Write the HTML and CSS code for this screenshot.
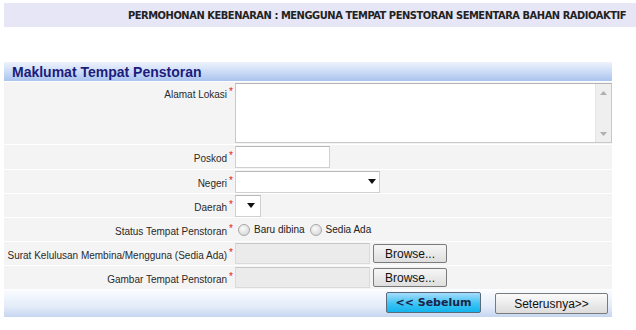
FILE: index.html
```html
<!DOCTYPE html>
<html lang="ms">
<head>
    <meta charset="UTF-8">
    <title>Maklumat Tempat Penstoran</title>
    <link rel="stylesheet" href="styles.css">
</head>
<body>
    <div class="page-title">PERMOHONAN KEBENARAN : MENGGUNA TEMPAT PENSTORAN SEMENTARA BAHAN RADIOAKTIF</div>

    <div class="panel">
        <div class="panel-head">Maklumat Tempat Penstoran</div>

        <!-- Alamat -->
        <div class="row row-tall">
            <label class="lbl">Alamat Lokasi<span class="req">*</span></label>
            <div class="field">
                <div class="textbox">
                    <textarea></textarea>
                    <div class="scroll">
                        <svg width="7" height="4" viewBox="0 0 7 4"><path d="M0 4 L3.5 0 L7 4 Z" fill="#b0b0b0"/></svg>
                        <svg width="7" height="4" viewBox="0 0 7 4"><path d="M0 0 L3.5 4 L7 0 Z" fill="#b0b0b0"/></svg>
                    </div>
                </div>
            </div>
        </div>

        <div class="row">
            <label class="lbl">Poskod<span class="req">*</span></label>
            <div class="field"><input type="text" class="txt poskod"></div>
        </div>

        <div class="row">
            <label class="lbl">Negeri<span class="req">*</span></label>
            <div class="field">
                <div class="select negeri">
                    <svg width="8" height="5" viewBox="0 0 8 5"><path d="M0 0 L8 0 L4 5 Z" fill="#111"/></svg>
                </div>
            </div>
        </div>

        <div class="row">
            <label class="lbl">Daerah<span class="req">*</span></label>
            <div class="field">
                <div class="select daerah">
                    <svg width="8" height="5" viewBox="0 0 8 5"><path d="M0 0 L8 0 L4 5 Z" fill="#111"/></svg>
                </div>
            </div>
        </div>

        <div class="row">
            <label class="lbl">Status Tempat Penstoran<span class="req">*</span></label>
            <div class="field radios">
                <span class="opt"><span class="radio"></span>Baru dibina</span>
                <span class="opt"><span class="radio"></span>Sedia Ada</span>
            </div>
        </div>

        <div class="row">
            <label class="lbl">Surat Kelulusan Membina/Mengguna (Sedia Ada)<span class="req">*</span></label>
            <div class="field">
                <div class="filebox"></div>
                <button class="browse">Browse...</button>
            </div>
        </div>

        <div class="row">
            <label class="lbl">Gambar Tempat Penstoran<span class="req">*</span></label>
            <div class="field">
                <div class="filebox"></div>
                <button class="browse">Browse...</button>
            </div>
        </div>

        <div class="panel-foot">
            <button class="btn-prev">&lt;&lt; Sebelum</button>
            <button class="btn-next">Seterusnya&gt;&gt;</button>
        </div>
    </div>
</body>
</html>
```

FILE: styles.css
```css
body {
    margin: 0;
    padding: 3px 0 0 4px;
    font-family: "Liberation Sans", Arial, sans-serif;
    font-size: 10px;
    color: #333;
    background: #fff;
}

.page-title {
    height: 24px;
    line-height: 25px;
    padding-right: 10px;
    text-align: right;
    background: #e6e6f6;
    font-family: "DejaVu Sans Condensed", "Liberation Sans Narrow", sans-serif;
    font-stretch: condensed;
    font-weight: bold;
    font-size: 11px;
    letter-spacing: -0.45px;
    color: #222;
}

.panel {
    width: 608px;
    margin-top: 35px;
}

.panel-head {
    height: 19px;
    line-height: 20px;
    padding-left: 8px;
    background: linear-gradient(#eef3fd, #c9daf6 55%, #a9c3ee);
    font-size: 14px;
    font-weight: bold;
    color: #1c1c7c;
}

.row {
    display: grid;
    grid-template-columns: 231px 1fr;
    min-height: 23px;
    background: #f4f4f4;
    border-top: 1px solid #fff;
    align-items: center;
}

.row-tall {
    align-items: start;
    min-height: 62px;
}

.lbl {
    font-family: "Liberation Sans", Arial, sans-serif;
    font-size: 10px;
    color: #2a2a2a;
    text-align: right;
    padding-right: 2px;
    white-space: nowrap;
}

.row-tall .lbl {
    padding-top: 4px;
}

.req {
    color: #e02020;
    font-size: 10px;
    vertical-align: 3px;
    margin-left: 2px;
}

.field {
    display: flex;
    align-items: center;
}

.textbox {
    display: flex;
    width: 375px;
    height: 58px;
    margin: 1px 0;
    border: 1px solid #c8c8c8;
    border-top-color: #b4b4b4;
    background: #fff;
}

.textbox textarea {
    flex: 1;
    border: none;
    resize: none;
    outline: none;
    padding: 0;
}

.scroll {
    width: 15px;
    background: #efefef;
    border-left: 1px solid #e4e4e4;
    display: flex;
    flex-direction: column;
    justify-content: space-between;
    align-items: center;
    padding: 7px 0 6px;
}

.txt {
    box-sizing: border-box;
    height: 22px;
    margin: 1px 0;
    border: 1px solid #d0d0d0;
    border-top-color: #b8b8b8;
    background: #fff;
}

.poskod {
    width: 95px;
}

.select {
    box-sizing: border-box;
    height: 22px;
    display: flex;
    align-items: center;
    justify-content: flex-end;
    border: 1px solid #d0d0d0;
    border-top-color: #b8b8b8;
    background: #fff;
}

.negeri {
    width: 145px;
    padding-right: 3px;
}

.daerah {
    width: 26px;
    padding-right: 5px;
}

.radios {
    padding-left: 3px;
    gap: 5px;
    color: #222;
}

.opt {
    display: flex;
    align-items: center;
    gap: 4px;
}

.radio {
    width: 10px;
    height: 10px;
    border-radius: 50%;
    border: 1px solid #a8a8a8;
    background: radial-gradient(circle at 40% 35%, #fafafa, #d2d2d2);
}

.filebox {
    box-sizing: border-box;
    width: 135px;
    height: 21px;
    border: 1px solid #dadada;
    border-top-color: #c8c8c8;
    background: #ebebeb;
}

.browse {
    width: 74px;
    height: 19px;
    margin-left: 3px;
    padding: 0;
    font-family: "Liberation Sans", Arial, sans-serif;
    font-size: 12px;
    color: #111;
    border: 1px solid #7a7a7a;
    border-radius: 2px;
    background: linear-gradient(#f6f6f6, #dedede);
}

.panel-foot {
    display: flex;
    justify-content: flex-end;
    align-items: flex-start;
    height: 25px;
    padding: 2px 4px 0 0;
    border-top: 1px solid #fff;
    background: linear-gradient(#fafcff, #e4ecf9 60%, #c6d6f0);
}

.btn-prev {
    width: 95px;
    height: 21px;
    padding: 0;
    font-family: Verdana, "DejaVu Sans", sans-serif;
    font-size: 11px;
    font-weight: bold;
    color: #1a2448;
    border: 1px solid #5a6a7a;
    border-radius: 2px;
    background: linear-gradient(#a6dcfb, #3ec3f3 55%, #12b4ee);
}

.btn-next {
    width: 113px;
    height: 21px;
    margin: 1px 0 0 14px;
    padding: 0;
    font-family: "Liberation Sans", Arial, sans-serif;
    font-size: 12px;
    color: #111;
    border: 1px solid #7a7a7a;
    border-radius: 2px;
    background: linear-gradient(#fbfbfb, #dcdcdc);
}
```
